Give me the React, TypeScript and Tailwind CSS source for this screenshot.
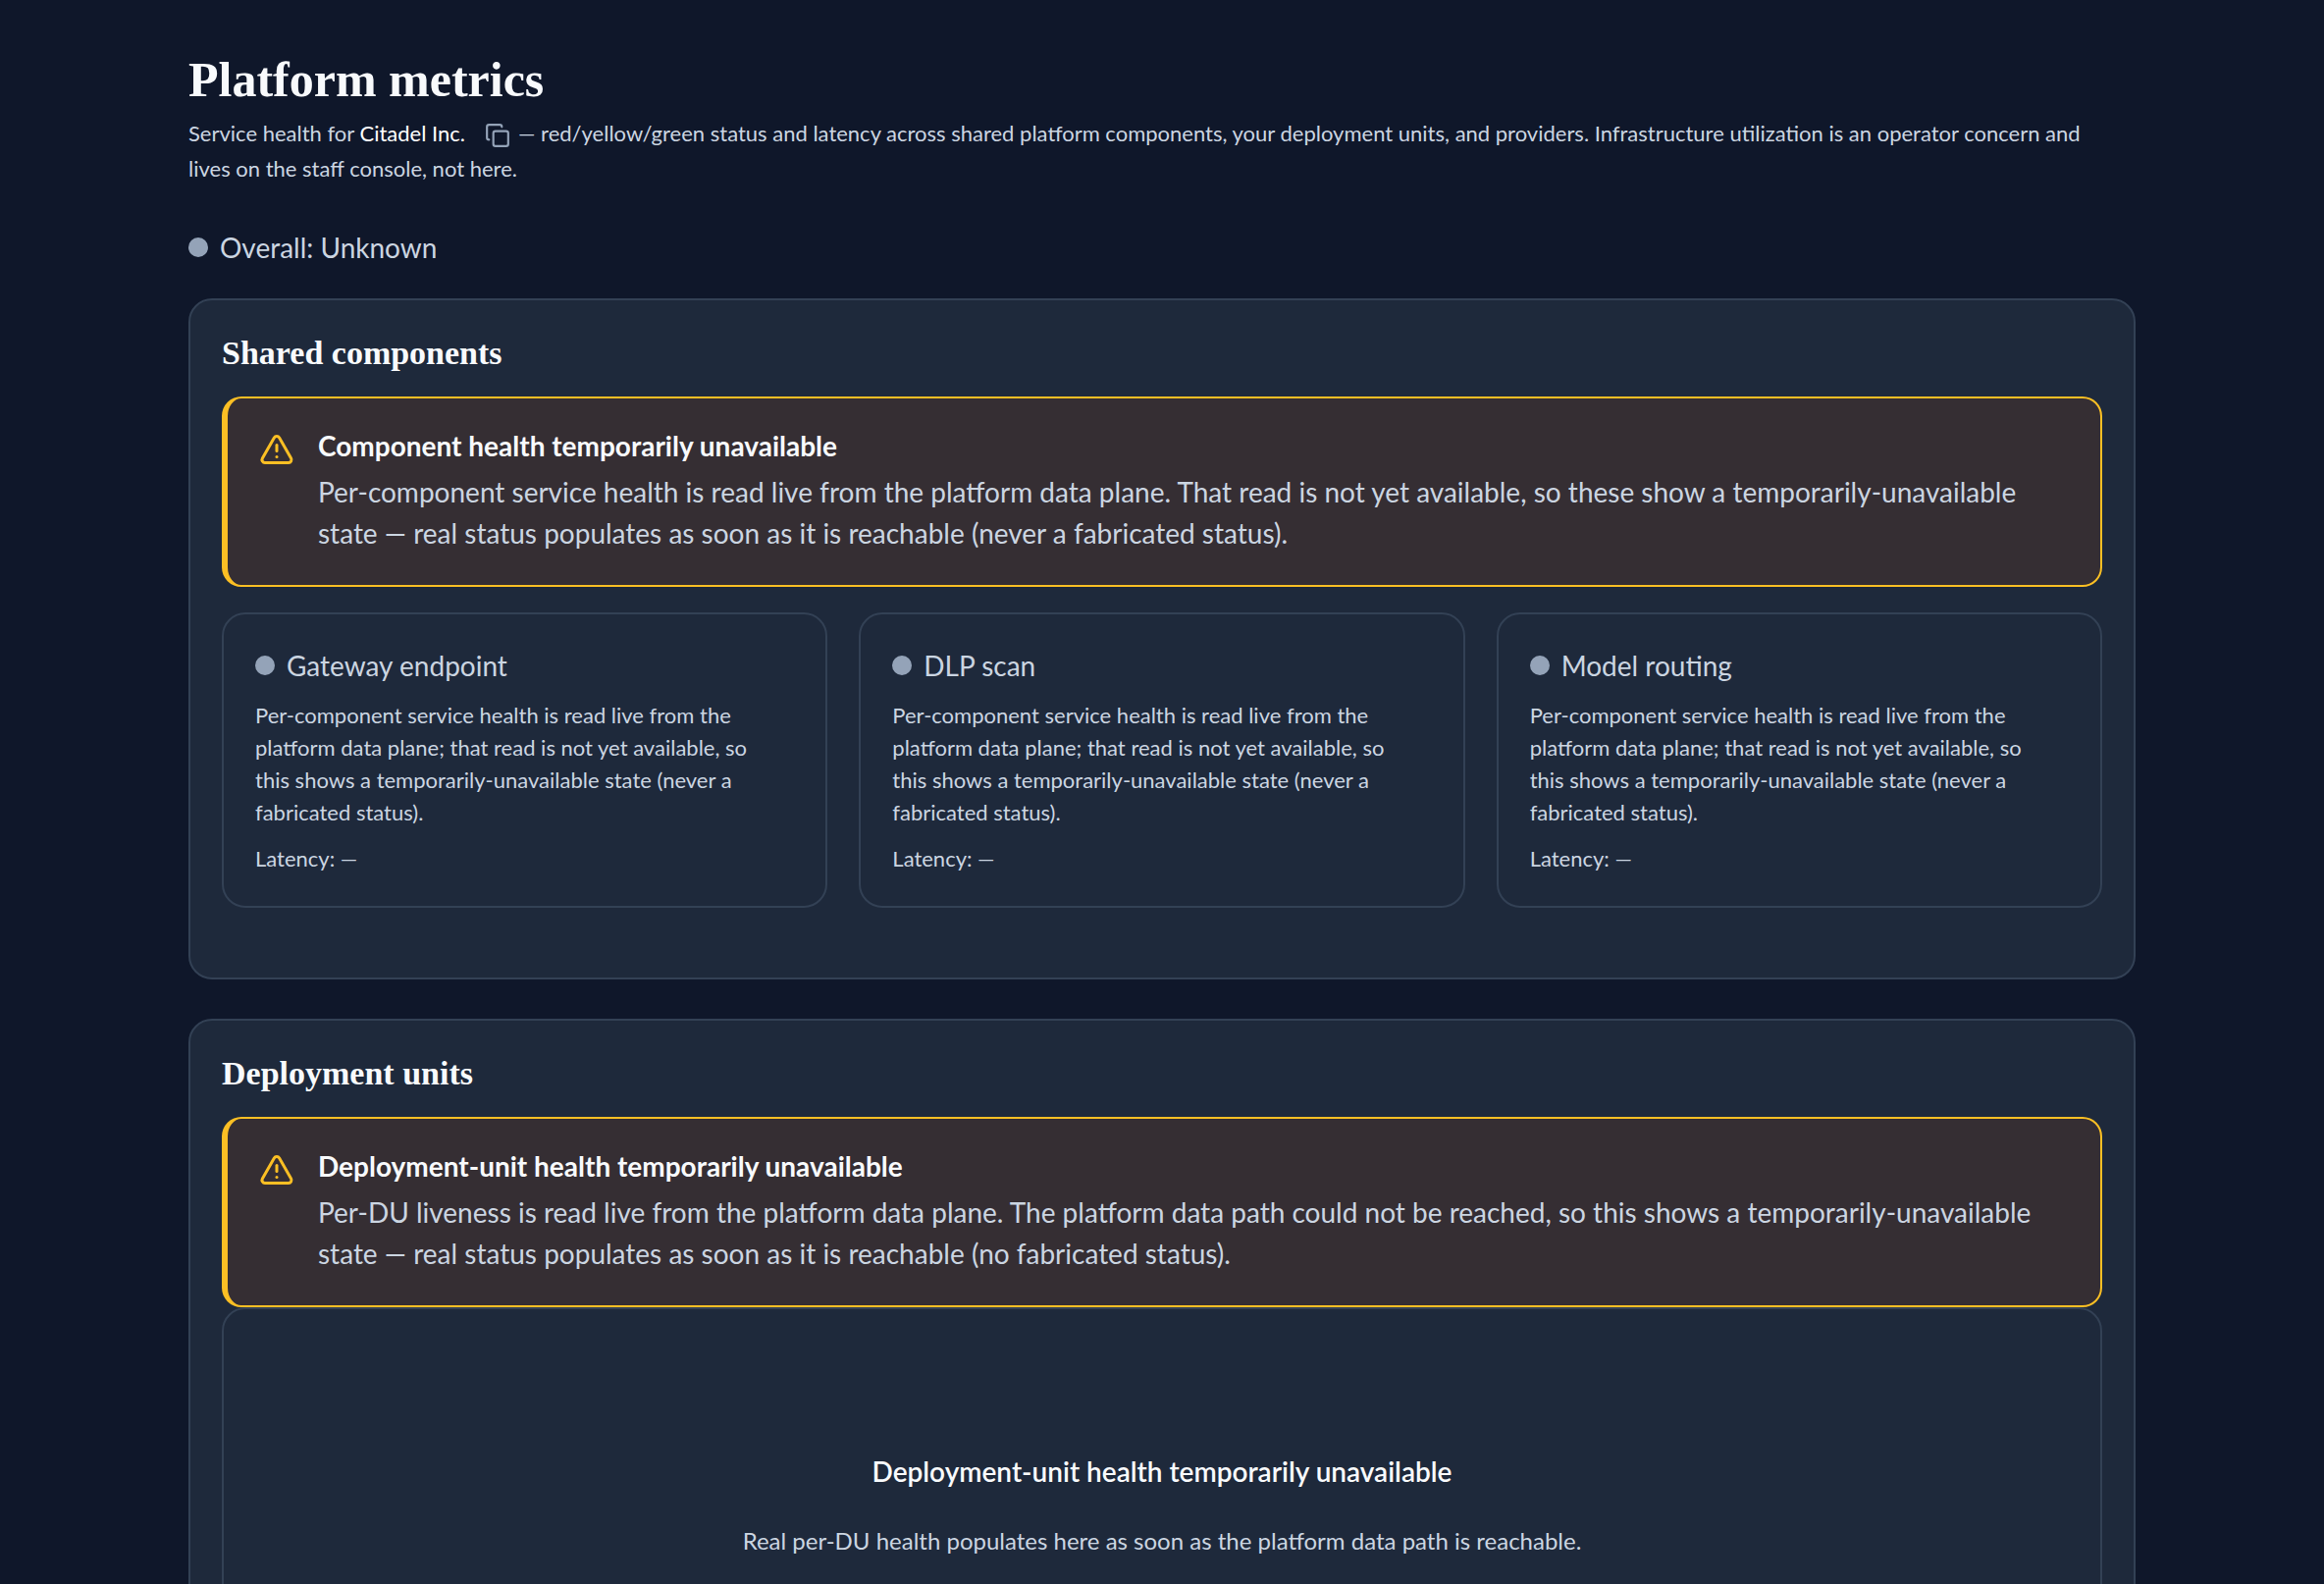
import { ReactNode } from 'react'
import { Copy, TriangleAlert } from 'lucide-react'

interface NoticeProps {
  title: string
  children: ReactNode
}

interface SectionProps {
  title: string
  children: ReactNode
}

const components = ['Gateway endpoint', 'DLP scan', 'Model routing']

const StatusLabel = ({ label }: { label: string }) => (
  <div className="flex items-center gap-3 text-[28px] leading-10">
    <span className="h-5 w-5 shrink-0 rounded-full bg-[#94a3b8]" />
    <span>{label}</span>
  </div>
)

const Notice = ({ title, children }: NoticeProps) => (
  <div
    role="status"
    className="flex gap-6 rounded-[20px] border-2 border-l-[6px] border-[#fbbf24] bg-[#352e33] p-8"
  >
    <TriangleAlert className="mt-0.5 h-9 w-9 shrink-0 text-[#fbbf24]" />
    <div className="flex flex-col gap-2.5">
      <p className="text-[28px] leading-8 font-bold text-[#f8fafc]">{title}</p>
      <p className="text-[28px] leading-[42px]">{children}</p>
    </div>
  </div>
)

const Section = ({ title, children }: SectionProps) => (
  <section className="rounded-3xl border-2 border-[#334155] bg-[#1e293b] px-8 pt-8 pb-[71px]">
    <h2 className="mb-[22px] font-['Liberation_Serif',serif] text-[34px] leading-[44px] font-bold text-[#f8fafc]">
      {title}
    </h2>
    {children}
  </section>
)

const ComponentCard = ({ name }: { name: string }) => (
  <div className="rounded-3xl border-2 border-[#334155] p-8">
    <StatusLabel label={name} />
    <p className="mt-3.5 pr-6 text-[22px] leading-[33px]">
      Per-component service health is read live from the platform data plane;
      that read is not yet available, so this shows a temporarily-unavailable
      state (never a fabricated status).
    </p>
    <p className="mt-3.5 text-[22px] leading-[33px]">Latency: —</p>
  </div>
)

export default function App() {
  return (
    <main className="min-h-screen bg-[#0f172a] px-48 pt-12 pb-24 font-[Lato,sans-serif] text-[#cbd5e1]">
      <header>
        <h1 className="mb-1 font-['Liberation_Serif',serif] text-[50px] leading-[66px] font-bold text-[#f8fafc]">
          Platform metrics
        </h1>
        <p className="pr-8 text-[22px] leading-[36px]">
          Service health for <span className="text-white">Citadel Inc.</span>
          <button
            type="button"
            aria-label="Copy organization"
            className="mr-2 ml-5 align-middle text-[#94a3b8]"
          >
            <Copy className="h-[26px] w-[26px]" />
          </button>
          — red/yellow/green status and latency across shared platform
          components, your deployment units, and providers. Infrastructure
          utilization is an operator concern and lives on the staff console,
          not here.
        </p>
      </header>

      <div className="mt-[42px] mb-8">
        <StatusLabel label="Overall: Unknown" />
      </div>

      <div className="flex flex-col gap-10">
        <Section title="Shared components">
          <Notice title="Component health temporarily unavailable">
            Per-component service health is read live from the platform data
            plane. That read is not yet available, so these show a
            temporarily-unavailable state — real status populates as soon as it
            is reachable (never a fabricated status).
          </Notice>
          <div className="mt-[26px] grid grid-cols-3 gap-8">
            {components.map((name) => (
              <ComponentCard key={name} name={name} />
            ))}
          </div>
        </Section>

        <Section title="Deployment units">
          <Notice title="Deployment-unit health temporarily unavailable">
            Per-DU liveness is read live from the platform data plane. The
            platform data path could not be reached, so this shows a
            temporarily-unavailable state — real status populates as soon as it
            is reachable (no fabricated status).
          </Notice>
          <div className="flex flex-col items-center gap-8 rounded-3xl border-2 border-[#334155] px-8 py-36 text-center">
            <h3 className="text-[28px] leading-[42px] font-semibold text-[#f8fafc]">
              Deployment-unit health temporarily unavailable
            </h3>
            <p className="text-[24px] leading-[36px]">
              Real per-DU health populates here as soon as the platform data
              path is reachable.
            </p>
          </div>
        </Section>
      </div>
    </main>
  )
}
